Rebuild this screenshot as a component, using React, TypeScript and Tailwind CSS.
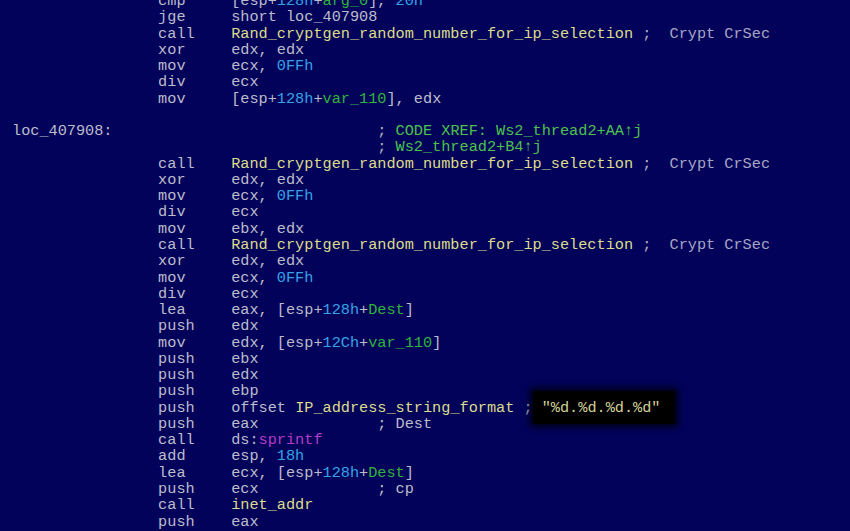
import React from 'react'

type Seg = [string, string?]

// colour keys used by the listing
const C: Record<string, string> = {
  txt: 'text-[#bcbccc]',
  name: 'text-[#dcdc8a]',
  num: 'text-[#35a2e6]',
  var: 'text-[#2fb43c]',
  xref: 'text-[#4cc24c]',
  api: 'text-[#b43cc8]',
  cmt: 'text-[#a6a6c4]',
  semi: 'text-[#b0b0c4]',
}

const ins = (op: string, ...rest: Seg[]): Seg[] => [
  ['                ' + op.padEnd(8, ' ')],
  ...rest,
]

const rand: Seg[] = [
  ['Rand_cryptgen_random_number_for_ip_selection', 'name'],
  [' ;  ', 'semi'],
  ['Crypt CrSec', 'cmt'],
]

const lines: (Seg[] | 'fmt')[] = [
  ins('cmp', ['[esp+'], ['128h', 'num'], ['+'], ['arg_0', 'var'], ['], '], ['20h', 'num']),
  ins('jge', ['short loc_407908']),
  ins('call', ...rand),
  ins('xor', ['edx, edx']),
  ins('mov', ['ecx, '], ['0FFh', 'num']),
  ins('div', ['ecx']),
  ins('mov', ['[esp+'], ['128h', 'num'], ['+'], ['var_110', 'var'], ['], edx']),
  [[' ']],
  [
    ['loc_407908:'],
    ['                             '],
    ['; ', 'semi'],
    ['CODE XREF: Ws2_thread2+AA', 'xref'],
    ['↑', 'xref'],
    ['j', 'xref'],
  ],
  [
    ['                                        '],
    ['; ', 'semi'],
    ['Ws2_thread2+B4', 'xref'],
    ['↑', 'xref'],
    ['j', 'xref'],
  ],
  ins('call', ...rand),
  ins('xor', ['edx, edx']),
  ins('mov', ['ecx, '], ['0FFh', 'num']),
  ins('div', ['ecx']),
  ins('mov', ['ebx, edx']),
  ins('call', ...rand),
  ins('xor', ['edx, edx']),
  ins('mov', ['ecx, '], ['0FFh', 'num']),
  ins('div', ['ecx']),
  ins('lea', ['eax, [esp+'], ['128h', 'num'], ['+'], ['Dest', 'var'], [']']),
  ins('push', ['edx']),
  ins('mov', ['edx, [esp+'], ['12Ch', 'num'], ['+'], ['var_110', 'var'], [']']),
  ins('push', ['ebx']),
  ins('push', ['edx']),
  ins('push', ['ebp']),
  'fmt',
  ins('push', ['eax             '], ['; Dest', 'txt']),
  ins('call', ['ds:'], ['sprintf', 'api']),
  ins('add', ['esp, '], ['18h', 'num']),
  ins('lea', ['ecx, [esp+'], ['128h', 'num'], ['+'], ['Dest', 'var'], [']']),
  ins('push', ['ecx             '], ['; cp', 'txt']),
  ins('call', ['inet_addr', 'name']),
  ins('push', ['eax']),
]

function Line({ segs }: { segs: Seg[] }) {
  return (
    <div className="h-[16.27px] whitespace-pre">
      {segs.map(([t, c], i) => (
        <span key={i} className={t === '↑' ? `${C.xref} font-bold` : C[c ?? 'txt']}>
          {t}
        </span>
      ))}
    </div>
  )
}

export default function App() {
  return (
    <div className="h-[531px] w-[850px] overflow-hidden bg-[#02025a]">
      <div className="mt-[-7px] pl-[12px] font-['Liberation_Mono',monospace] text-[15.23px] leading-[16.27px]">
        {lines.map((l, i) =>
          l === 'fmt' ? (
            <div key={i} className="h-[16.27px] whitespace-pre">
              <span className={C.txt}>{'                push    offset '}</span>
              <span className={C.name}>IP_address_string_format</span>
              <span className={C.semi}>{' ; '}</span>
              <span className="relative">
                <span className="absolute -left-[9px] -top-[8px] h-[33px] w-[142px] bg-black shadow-[0_0_7px_3px_rgba(0,0,0,0.8)]" />
                <span className="relative text-[#cfcf96]">"%d.%d.%d.%d"</span>
              </span>
            </div>
          ) : (
            <Line key={i} segs={l} />
          ),
        )}
      </div>
    </div>
  )
}
